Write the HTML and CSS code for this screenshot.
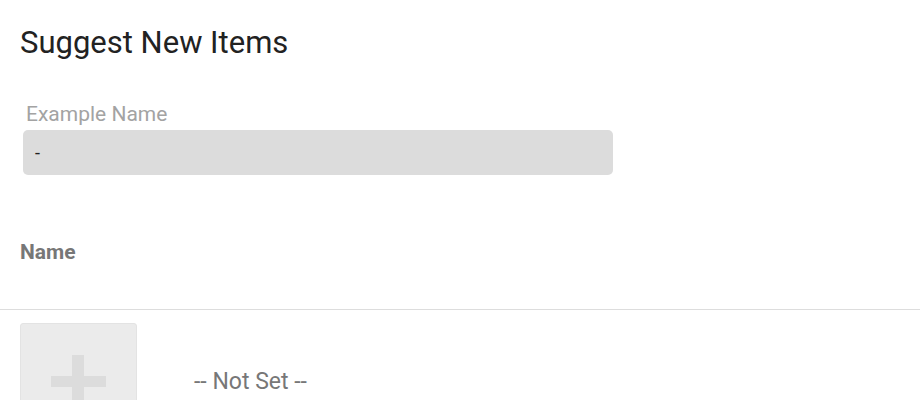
FILE: index.html
```html
<!DOCTYPE html>
<html lang="en">
<head>
<meta charset="utf-8">
<title>Suggest New Items</title>
<link rel="stylesheet" href="styles.css">
</head>
<body>
<div class="page">
  <h1 class="title">Suggest New Items</h1>
  <div class="field">
    <label class="field-label">Example Name</label>
    <div class="field-input">-</div>
  </div>
  <div class="col-header">Name</div>
</div>
<div class="row">
  <div class="thumb">
    <span class="plus-h"></span>
    <span class="plus-v"></span>
  </div>
  <div class="row-text">-- Not Set --</div>
</div>
</body>
</html>
```
FILE: styles.css
```css
html, body {
  margin: 0;
  padding: 0;
  background: #ffffff;
  font-family: Roboto, "Liberation Sans", sans-serif;
  overflow: hidden;
  height: 400px;
}
.page {
  padding: 0 20px;
}
.title {
  margin: 0;
  padding-top: 25px;
  font-size: 31px;
  font-weight: 400;
  line-height: 36px;
  color: #222222;
}
.field {
  margin-top: 40px;
  margin-left: 3px;
  width: 590px;
}
.field-label {
  display: block;
  margin-left: 3px;
  font-size: 21px;
  line-height: 26px;
  color: #a3a3a3;
}
.field-input {
  margin-top: 3px;
  height: 45px;
  box-sizing: border-box;
  padding: 0 12px;
  display: flex;
  align-items: center;
  background: #dcdcdc;
  border-radius: 5px;
  font-size: 18px;
  color: #222222;
}
.col-header {
  margin-top: 64px;
  font-size: 21px;
  font-weight: 700;
  line-height: 26px;
  color: #777777;
  padding-bottom: 44px;
}
.row {
  border-top: 1px solid #dddddd;
  padding: 13px 20px 0;
  display: flex;
  align-items: center;
  gap: 57px;
}
.thumb {
  position: relative;
  width: 117px;
  height: 117px;
  box-sizing: border-box;
  background: #ebebeb;
  border: 1px solid #e3e3e3;
  border-radius: 3px;
  flex: none;
}
.plus-h {
  position: absolute;
  left: 30px;
  top: 52px;
  width: 55px;
  height: 11px;
  background: #dcdcdc;
}
.plus-v {
  position: absolute;
  left: 51px;
  top: 31px;
  width: 12px;
  height: 55px;
  background: #dcdcdc;
}
.row-text {
  font-size: 23px;
  color: #777777;
}
```
